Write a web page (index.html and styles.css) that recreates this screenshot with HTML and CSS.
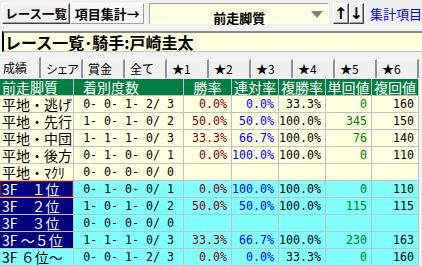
FILE: index.html
```html
<!DOCTYPE html>
<html lang="ja">
<head>
    <meta charset="UTF-8">
    <title>項目集計</title>
    <link rel="stylesheet" href="styles.css">
</head>
<body>
    <div class="toolbar">
        <button class="btn btn-list">レース一覧</button>
        <button class="btn btn-sum pressed">項目集計→</button>
        <div class="combo">
            <span class="combo-text">前走脚質</span>
            <span class="combo-arrow"></span>
        </div>
        <button class="btn btn-sort">↑</button><button class="btn btn-sort">↓</button>
        <span class="link">集計項目</span>
    </div>

    <div class="title-box">レース一覧･騎手:戸崎圭太</div>

    <div class="tabs">
        <div class="tab active">成績</div>
        <div class="tab narrow">シェア</div>
        <div class="tab">賞金</div>
        <div class="tab">全て</div>
        <div class="tab">★1</div>
        <div class="tab">★2</div>
        <div class="tab">★3</div>
        <div class="tab">★4</div>
        <div class="tab">★5</div>
        <div class="tab">★6</div>
    </div>

    <table class="grid">
        <colgroup>
            <col class="c-name">
            <col class="c-count">
            <col class="c-rate">
            <col class="c-rate2">
            <col class="c-rate2">
            <col class="c-ret">
            <col class="c-ret2">
        </colgroup>
        <thead>
            <tr>
                <th class="h-left">前走脚質</th>
                <th class="h-count">着別度数</th>
                <th>勝率</th>
                <th>連対率</th>
                <th>複勝率</th>
                <th>単回値</th>
                <th>複回値</th>
            </tr>
        </thead>
        <tbody>
            <tr class="flat">
                <td class="name">平地・逃げ</td><td class="count">0- 0- 1- 2/ 3</td>
                <td class="num win">0.0%</td><td class="num ren">0.0%</td><td class="num">33.3%</td>
                <td class="num tan">0</td><td class="num">160</td>
            </tr>
            <tr class="flat">
                <td class="name">平地・先行</td><td class="count">1- 0- 1- 0/ 2</td>
                <td class="num win">50.0%</td><td class="num ren">50.0%</td><td class="num">100.0%</td>
                <td class="num tan">345</td><td class="num">150</td>
            </tr>
            <tr class="flat">
                <td class="name">平地・中団</td><td class="count">1- 1- 1- 0/ 3</td>
                <td class="num win">33.3%</td><td class="num ren">66.7%</td><td class="num">100.0%</td>
                <td class="num tan">76</td><td class="num">140</td>
            </tr>
            <tr class="flat">
                <td class="name">平地・後方</td><td class="count">0- 1- 0- 0/ 1</td>
                <td class="num win">0.0%</td><td class="num ren">100.0%</td><td class="num">100.0%</td>
                <td class="num tan">0</td><td class="num">110</td>
            </tr>
            <tr class="flat">
                <td class="name">平地・ﾏｸﾘ</td><td class="count">0- 0- 0- 0/ 0</td>
                <td class="num"></td><td class="num"></td><td class="num"></td>
                <td class="num"></td><td class="num"></td>
            </tr>
            <tr class="last3f">
                <td class="name dark selected">3F　１位</td><td class="count">0- 1- 0- 0/ 1</td>
                <td class="num win">0.0%</td><td class="num ren">100.0%</td><td class="num">100.0%</td>
                <td class="num tan">0</td><td class="num">110</td>
            </tr>
            <tr class="last3f">
                <td class="name dark">3F　２位</td><td class="count">1- 0- 1- 0/ 2</td>
                <td class="num win">50.0%</td><td class="num ren">50.0%</td><td class="num">100.0%</td>
                <td class="num tan">115</td><td class="num">115</td>
            </tr>
            <tr class="last3f">
                <td class="name dark">3F　３位</td><td class="count">0- 0- 0- 0/ 0</td>
                <td class="num"></td><td class="num"></td><td class="num"></td>
                <td class="num"></td><td class="num"></td>
            </tr>
            <tr class="last3f">
                <td class="name dark">3F ～５位</td><td class="count">1- 1- 1- 0/ 3</td>
                <td class="num win">33.3%</td><td class="num ren">66.7%</td><td class="num">100.0%</td>
                <td class="num tan">230</td><td class="num">163</td>
            </tr>
            <tr class="last3f">
                <td class="name">3F ６位～</td><td class="count">0- 0- 1- 2/ 3</td>
                <td class="num win">0.0%</td><td class="num ren">0.0%</td><td class="num">33.3%</td>
                <td class="num tan">0</td><td class="num">160</td>
            </tr>
        </tbody>
    </table>
</body>
</html>
```
FILE: styles.css
```css
body {
    margin: 0;
    width: 422px;
    height: 266px;
    overflow: hidden;
    background-color: #f0f0f0;
    font-family: "Noto Sans CJK JP", sans-serif;
    color: #000;
}

/* top toolbar */
.toolbar {
    display: flex;
    align-items: center;
    height: 21px;
    padding: 3px 0 7px 2px;
    white-space: nowrap;
}

.btn {
    height: 21px;
    margin: 0;
    padding: 0;
    font-family: "Noto Sans CJK JP", sans-serif;
    font-size: 13px;
    font-weight: bold;
    line-height: 17px;
    color: #000;
    background-color: #f0f0f0;
    border: 1px solid;
    border-color: #fff #404040 #404040 #fff;
    box-shadow: inset -1px -1px 0 #a0a0a0;
}

.btn-list {
    width: 71px;
    font-size: 12.5px;
}

.btn-sum {
    width: 77px;
}

.btn.pressed {
    background-color: #f8f8f8;
    background-image: radial-gradient(#e4e4e4 0.6px, transparent 0.7px);
    background-size: 2px 2px;
    border-color: #fff #a0a0a0 #a0a0a0 #fff;
    box-shadow: none;
}

.combo {
    position: relative;
    width: 185px;
    height: 19px;
    margin-left: 5px;
    background-color: #ffffe0;
    border: 1px solid;
    border-color: #a0a0a0 #fff #fff #a0a0a0;
    text-align: center;
}

.combo-text {
    font-size: 13px;
    font-weight: bold;
    line-height: 19px;
}

.combo-arrow {
    position: absolute;
    right: 5px;
    top: 7px;
    width: 0;
    height: 0;
    border-left: 6px solid transparent;
    border-right: 6px solid transparent;
    border-top: 7px solid #808080;
}

.btn-sort {
    width: 16px;
    font-family: "DejaVu Sans", sans-serif;
    font-size: 16px;
    font-weight: bold;
    line-height: 17px;
}

.combo + .btn-sort {
    margin-left: 4px;
}

.link {
    margin-left: 6px;
    font-size: 13px;
    line-height: 17px;
    color: #0000ff;
}

/* title box */
.title-box {
    height: 18px;
    margin-left: 2px;
    padding-left: 1px;
    background-color: #ffffe0;
    border-top: 2px solid #8a8a8a;
    border-left: 2px solid #000;
    border-bottom: 1px solid #c8c8c8;
    font-size: 16px;
    font-weight: bold;
    line-height: 18px;
    white-space: nowrap;
}

/* tab strip */
.tabs {
    display: flex;
    height: 21px;
    margin-top: 5px;
    margin-bottom: 1px;
    white-space: nowrap;
}

.tab {
    box-sizing: border-box;
    width: 42px;
    height: 19px;
    margin-top: 2px;
    padding-left: 4px;
    font-size: 12px;
    line-height: 18px;
    border-top: 1px solid #fff;
    border-left: 1px solid #fff;
    border-right: 2px solid #909090;
    overflow: hidden;
}

.tab.narrow {
    letter-spacing: -1.5px;
}

.tab.active {
    width: 41px;
    height: 21px;
    margin-top: 0;
    padding-left: 3px;
    border-left: none;
    line-height: 20px;
}

/* result grid */
.grid {
    table-layout: fixed;
    width: 419px;
    border-collapse: separate;
    border-spacing: 0;
}

.c-name { width: 74px; }
.c-count { width: 110px; }
.c-rate { width: 48px; }
.c-rate2 { width: 47px; }
.c-ret { width: 46px; }
.c-ret2 { width: 47px; }

.grid th,
.grid td {
    box-sizing: border-box;
    height: 17px;
    padding: 0;
    border-right: 1px solid #c0c0c0;
    border-bottom: 1px solid #c0c0c0;
    white-space: pre;
    line-height: 16px;
}

.grid th {
    background-color: #008040;
    color: #fff;
    font-size: 14px;
    font-weight: normal;
    text-align: center;
}

.grid th.h-left {
    text-align: left;
    padding-left: 2px;
}

.grid th.h-count {
    text-align: left;
    padding-left: 9px;
}

.flat td {
    background-color: #ffffe0;
}

.last3f td {
    background-color: #80ffff;
}

.grid td.name {
    padding-left: 2px;
    font-size: 14px;
}

.grid td.dark {
    background-color: #000080;
    color: #fff;
}

.grid td.selected {
    box-shadow: inset 0 0 0 1px #a01010;
}

.grid td.count,
.grid td.num {
    font-family: "DejaVu Sans Mono", monospace;
    font-size: 11.6px;
}

.grid td.count {
    text-align: center;
}

.grid td.num {
    text-align: right;
    padding-right: 4px;
}

.grid td.win {
    color: #800000;
}

.grid td.ren {
    color: #0000ff;
}

.grid td.tan {
    color: #008000;
}
```
